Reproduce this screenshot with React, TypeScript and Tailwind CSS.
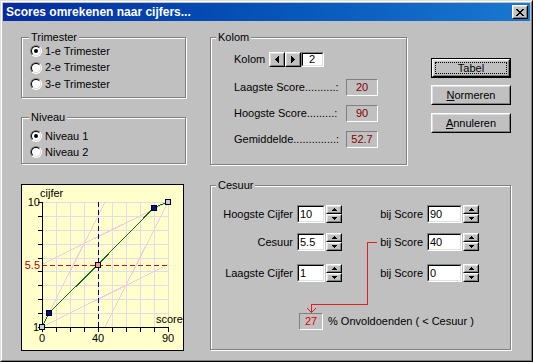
import React from "react";

type P = { className?: string; children?: React.ReactNode };

function Raised({ className = "", children }: P) {
  return (
    <div className={`border border-t-white border-l-white border-r-black border-b-black ${className}`}>
      <div className="w-full h-full border border-t-[#dfdfdf] border-l-[#dfdfdf] border-r-[#808080] border-b-[#808080] bg-[#c0c0c0] flex items-center justify-center">
        {children}
      </div>
    </div>
  );
}

function Sunken({ className = "", children }: P) {
  return (
    <div className={`border border-t-[#808080] border-l-[#808080] border-r-white border-b-white ${className}`}>
      <div className="w-full h-full border border-t-black border-l-black border-r-[#dfdfdf] border-b-[#dfdfdf] bg-white flex items-center">
        {children}
      </div>
    </div>
  );
}

function Group({ title, className = "", legendClass = "", children }: P & { title: string; legendClass?: string }) {
  return (
    <fieldset className={`min-w-0 border border-[#808080] shadow-[inset_1px_1px_0_#fff,1px_1px_0_#fff] ${className}`}>
      <legend className={`px-[2px] text-[11px] leading-[12px] bg-[#c0c0c0] ${legendClass}`}>{title}</legend>
      {children}
    </fieldset>
  );
}

function RadioDot({ checked }: { checked?: boolean }) {
  return (
    <span className="w-[12px] h-[12px] rounded-full border border-t-[#808080] border-l-[#808080] border-r-white border-b-white flex shrink-0">
      <span className="flex-1 rounded-full border border-t-black border-l-black border-r-[#dfdfdf] border-b-[#dfdfdf] bg-white flex items-center justify-center">
        {checked ? <span className="w-[4px] h-[4px] rounded-full bg-black" /> : null}
      </span>
    </span>
  );
}

function Spin({ className = "" }: P) {
  return (
    <div className={`flex flex-col w-[16px] h-[18px] ${className}`}>
      <Raised className="h-[9px]">
        <svg width="5" height="3" shapeRendering="crispEdges">
          <path d="M2 0h1v1h1v1h1v1H0V2h1V1h1z" fill="#000" />
        </svg>
      </Raised>
      <Raised className="h-[9px]">
        <svg width="5" height="3" shapeRendering="crispEdges">
          <path d="M0 0h5v1H4v1H3v1H2V2H1V1H0z" fill="#000" />
        </svg>
      </Raised>
    </div>
  );
}

function CRow({ className = "", left, lv, rv }: { className?: string; left: string; lv: string; rv: string }) {
  return (
    <div className={`flex items-center h-[18px] ${className}`}>
      <span className="w-[82px] text-right whitespace-nowrap">{left}</span>
      <Sunken className="ml-[4px] w-[28px] h-[18px]">
        <span className="pl-[1px]">{lv}</span>
      </Sunken>
      <Spin className="ml-[1px]" />
      <span className="ml-[35px] w-[46px] text-right whitespace-nowrap">bij Score</span>
      <Sunken className="ml-[4px] w-[35px] h-[18px]">
        <span className="pl-[1px]">{rv}</span>
      </Sunken>
      <Spin className="ml-[1px]" />
    </div>
  );
}

function StatRow({ className = "", label, value }: { className?: string; label: string; value: string }) {
  return (
    <div className={`flex items-center h-[17px] ${className}`}>
      <span className="w-[112px] whitespace-nowrap">{label}</span>
      <div className="w-[32px] h-[17px] border border-t-[#808080] border-l-[#808080] border-r-white border-b-white flex items-center justify-center text-[#800000]">
        {value}
      </div>
    </div>
  );
}

function Chart() {
  const X = (v: number) => 20 + 1.4 * v;
  const Y = (c: number) => 142 - (125 / 9) * (c - 1);
  const r = (n: number) => Math.round(n) + 0.5;
  const grid: React.ReactNode[] = [];
  for (let k = 1; k <= 9; k++) {
    grid.push(<line key={"v" + k} x1={r(X(10 * k))} y1={Y(10)} x2={r(X(10 * k))} y2={Y(1)} />);
    grid.push(<line key={"h" + k} x1={X(0)} y1={r(Y(k + 1))} x2={X(90)} y2={r(Y(k + 1))} />);
  }
  const yt: React.ReactNode[] = [];
  for (let c = 1; c <= 10; c++) {
    yt.push(<line key={"yt" + c} x1={16} y1={r(Y(c))} x2={20} y2={r(Y(c))} />);
  }
  const xt: React.ReactNode[] = [];
  for (let v = 0; v <= 90; v += 10) {
    xt.push(<line key={"xt" + v} x1={r(X(v))} y1={142} x2={r(X(v))} y2={147} />);
  }
  const sq = (cx: number, cy: number, fill: string) => (
    <rect x={Math.round(cx) - 3 + 0.5} y={Math.round(cy) - 3 + 0.5} width={5} height={5} fill={fill} stroke="#000" />
  );
  return (
    <svg width="161" height="165" className="block">
      <g shapeRendering="crispEdges" strokeWidth={1} fill="none">
        <g stroke="#e2dcea">{grid}</g>
        <g stroke="#f2c8e6">
          <line x1={X(0)} y1={Y(1)} x2={X(45)} y2={Y(10)} />
          <line x1={X(45)} y1={Y(1)} x2={X(90)} y2={Y(10)} />
          <line x1={X(0)} y1={Y(5.5)} x2={X(90)} y2={Y(10)} />
          <line x1={X(0)} y1={Y(1)} x2={X(90)} y2={Y(5.5)} />
        </g>
        <line x1={X(0)} y1={r(Y(5.5))} x2={X(90)} y2={r(Y(5.5))} stroke="#d01010" strokeDasharray="5 3" />
        <line x1={r(X(40))} y1={Y(10)} x2={r(X(40))} y2={Y(1)} stroke="#000080" strokeDasharray="5 3" />
        <polyline
          points={`${X(0)},${Y(1)} ${X(5)},${Y(2)} ${X(40)},${Y(5.5)} ${X(80)},${Y(9.6)} ${X(90)},${Y(10)}`}
          stroke="#107010"
        />
        <g stroke="#000">
          <line x1={20.5} y1={Y(10)} x2={20.5} y2={143} />
          <line x1={20} y1={142.5} x2={147} y2={142.5} />
          {yt}
          {xt}
        </g>
        {sq(X(5), Y(2), "#0010a0")}
        {sq(X(80), Y(9.6), "#0010a0")}
        {sq(X(40), Y(5.5), "#f09c9c")}
        {sq(X(0), Y(1), "#c8c8e8")}
        {sq(X(90), Y(10), "#c8c8e8")}
      </g>
      <g fontSize="11" fill="#000">
        <text x={18} y={12}>cijfer</text>
        <text x={18} y={21} textAnchor="end">10</text>
        <text x={18} y={83.5} textAnchor="end" fill="#c00000">5.5</text>
        <text x={17} y={146} textAnchor="end">1</text>
        <text x={20} y={157} textAnchor="middle">0</text>
        <text x={76} y={157} textAnchor="middle">40</text>
        <text x={146} y={157} textAnchor="middle">90</text>
        <text x={134} y={138}>score</text>
      </g>
    </svg>
  );
}

export default function App() {
  return (
    <div className="w-[533px] h-[362px] bg-[#c0c0c0] border border-t-[#dfdfdf] border-l-[#dfdfdf] border-r-black border-b-black font-['Liberation_Sans',Arial,sans-serif] text-[11px] leading-[13px] text-black select-none">
      <div className="h-full border border-t-white border-l-white border-r-[#808080] border-b-[#808080] p-px flex flex-col">
        {/* Title bar */}
        <div className="h-[18px] shrink-0 flex items-center bg-linear-to-r from-[#062b9f] to-[#1a78d0] pl-[3px] pr-[2px]">
          <span className="flex-1 text-white font-bold text-[12px] leading-[14px] whitespace-nowrap">
            Scores omrekenen naar cijfers...
          </span>
          <Raised className="w-[16px] h-[14px]">
            <svg width="8" height="7" shapeRendering="crispEdges">
              <path
                d="M0 0h2v1h1v1h2V1h1V0h2v1H7v1H6v1H5v1h1v1h1v1h1v1H6V6H5V5H3v1H2v1H0V6h1V5h1V4h1V3H2V2H1V1H0z"
                fill="#000"
              />
            </svg>
          </Raised>
        </div>

        {/* Content */}
        <div className="flex pl-[18px] pt-[10px]">
          {/* Left column */}
          <div className="flex flex-col w-[165px]">
            <Group title="Trimester" className="h-[67px]" legendClass="ml-[7px]">
              <div className="flex flex-col">
                <div className="flex items-center h-[16.5px] pl-[8px]">
                  <RadioDot checked />
                  <span className="ml-[3px]">1-e Trimester</span>
                </div>
                <div className="flex items-center h-[16.5px] pl-[8px]">
                  <RadioDot />
                  <span className="ml-[3px]">2-e Trimester</span>
                </div>
                <div className="flex items-center h-[16.5px] pl-[8px]">
                  <RadioDot />
                  <span className="ml-[3px]">3-e Trimester</span>
                </div>
              </div>
            </Group>
            <Group title="Niveau" className="mt-[13px] h-[53px]" legendClass="ml-[7px]">
              <div className="flex flex-col pt-[5px]">
                <div className="flex items-center h-[16px] pl-[8px]">
                  <RadioDot checked />
                  <span className="ml-[3px]">Niveau 1</span>
                </div>
                <div className="flex items-center h-[16px] pl-[8px]">
                  <RadioDot />
                  <span className="ml-[3px]">Niveau 2</span>
                </div>
              </div>
            </Group>
            <div className="mt-[20px] w-[163px] h-[167px] border border-black bg-[#ffffcc]">
              <Chart />
            </div>
          </div>

          {/* Right column */}
          <div className="ml-[24px] flex flex-col">
            <div className="flex">
              <Group title="Kolom" className="w-[197px] h-[134px]" legendClass="ml-[5px]">
                <div className="pl-[23px] flex flex-col">
                  <div className="mt-[9px] flex items-center h-[15px]">
                    <span className="w-[35px] whitespace-nowrap">Kolom :</span>
                    <Raised className="w-[16px] h-[15px]">
                      <svg width="4" height="7" shapeRendering="crispEdges">
                        <path d="M3 0h1v7H3V6H2V5H1V4H0V3h1V2h1V1h1z" fill="#000" />
                      </svg>
                    </Raised>
                    <Raised className="w-[16px] h-[15px]">
                      <svg width="4" height="7" shapeRendering="crispEdges">
                        <path d="M0 0h1v1h1v1h1v1h1v1H3v1H2v1H1v1H0z" fill="#000" />
                      </svg>
                    </Raised>
                    <Sunken className="w-[23px] h-[15px]">
                      <span className="pl-[6px]">2</span>
                    </Sunken>
                  </div>
                  <StatRow className="mt-[12px]" label="Laagste Score..........:" value="20" />
                  <StatRow className="mt-[9px]" label="Hoogste Score.........:" value="90" />
                  <StatRow className="mt-[9px]" label="Gemiddelde..............:" value="52.7" />
                </div>
              </Group>

              <div className="ml-[24px] w-[80px] flex flex-col pt-[27px]">
                <div className="h-[20px] border border-black">
                  <Raised className="h-full">
                    <span className="self-stretch flex-1 m-[1px] border border-dotted border-black flex items-center justify-center">
                      Tabel
                    </span>
                  </Raised>
                </div>
                <Raised className="h-[20px] mt-[7px]">
                  <span>
                    <span className="underline">N</span>ormeren
                  </span>
                </Raised>
                <Raised className="h-[20px] mt-[8px]">
                  <span>
                    <span className="underline">A</span>nnuleren
                  </span>
                </Raised>
              </div>
            </div>

            <Group title="Cesuur" className="mt-[14px] w-[301px] h-[171px]" legendClass="ml-[5px]">
              <div className="relative flex flex-col">
                <CRow className="mt-[14px]" left="Hoogste Cijfer" lv="10" rv="90" />
                <CRow className="mt-[10px]" left="Cesuur" lv="5.5" rv="40" />
                <CRow className="mt-[13px]" left="Laagste Cijfer" lv="1" rv="0" />
                <div className="mt-[31px] flex items-center h-[17px]">
                  <div className="ml-[88px] w-[24px] h-[17px] border border-t-[#808080] border-l-[#808080] border-r-white border-b-white flex items-center justify-center text-[#e00000]">
                    27
                  </div>
                  <span className="ml-[5px] whitespace-nowrap">{"% Onvoldoenden ( < Cesuur )"}</span>
                </div>
                <svg
                  width="170"
                  height="130"
                  className="absolute left-0 top-0 pointer-events-none"
                  shapeRendering="crispEdges"
                >
                  <polyline
                    points="166,51.5 156.5,51.5 156.5,113.5 100.5,113.5 100.5,122"
                    fill="none"
                    stroke="#e02020"
                  />
                  <polyline points="96.5,117.5 100.5,121.5 104.5,117.5" fill="none" stroke="#e02020" />
                </svg>
              </div>
            </Group>
          </div>
        </div>
      </div>
    </div>
  );
}
